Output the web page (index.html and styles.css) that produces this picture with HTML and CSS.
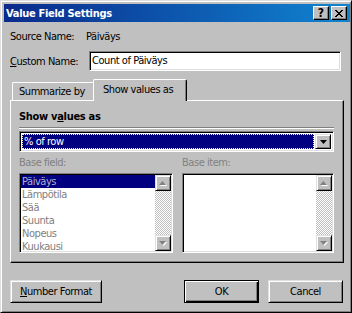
FILE: index.html
```html
<!DOCTYPE html>
<html>
<head>
<meta charset="utf-8">
<link rel="stylesheet" href="styles.css">
</head>
<body>
<div class="window">
  <div class="titlebar">
    <span class="title">Value Field Settings</span>
    <div class="tbtns">
      <div class="tbtn help">?</div>
      <div class="tbtn close">
        <svg width="8" height="7" viewBox="0 0 8 7"><path d="M0 0h2v1h1v1h2v-1h1v-1h2v1h-1v1h-1v1h-1v1h1v1h1v1h1v1h-2v-1h-1v-1h-2v1h-1v1h-2v-1h1v-1h1v-1h1v-1h-1v-1h-1v-1h-1z" fill="#000"/></svg>
      </div>
    </div>
  </div>
  <div class="content">
    <div class="row source">
      <span class="lbl lbl-src">Source Name:</span>
      <span>Päiväys</span>
    </div>
    <div class="row custom">
      <span class="lbl lbl-cust"><u>C</u>ustom Name:</span>
      <div class="field">Count of Päiväys</div>
    </div>
    <div class="tabs">
      <div class="tab inactive">Summarize by</div>
      <div class="tab active">Show values as</div>
    </div>
    <div class="panel">
      <div class="heading">Show v<u>a</u>lues as</div>
      <div class="etch"></div>
      <div class="combo">
        <div class="combo-sel"><span>% of row</span></div>
        <div class="btn3d combo-btn">
          <svg width="7" height="4" viewBox="0 0 7 4"><path d="M0 0h7l-3.5 4z" fill="#000"/></svg>
        </div>
      </div>
      <div class="pair labels">
        <span class="dis">Base field:</span>
        <span class="dis">Base item:</span>
      </div>
      <div class="pair lists">
        <div class="list">
          <div class="items">
            <div class="item sel">Päiväys</div>
            <div class="item">Lämpötila</div>
            <div class="item">Sää</div>
            <div class="item">Suunta</div>
            <div class="item">Nopeus</div>
            <div class="item">Kuukausi</div>
          </div>
          <div class="sbar">
            <div class="btn3d sbtn">
              <svg width="8" height="5" viewBox="0 0 8 5"><path d="M1 5h7l-3.5-4z" fill="#fff"/><path d="M0 4h7l-3.5-4z" fill="#808080"/></svg>
            </div>
            <div class="track"></div>
            <div class="btn3d sbtn">
              <svg width="8" height="5" viewBox="0 0 8 5"><path d="M1 1h7l-3.5 4z" fill="#fff"/><path d="M0 0h7l-3.5 4z" fill="#808080"/></svg>
            </div>
          </div>
        </div>
        <div class="list">
          <div class="items"></div>
          <div class="sbar">
            <div class="btn3d sbtn">
              <svg width="8" height="5" viewBox="0 0 8 5"><path d="M1 5h7l-3.5-4z" fill="#fff"/><path d="M0 4h7l-3.5-4z" fill="#808080"/></svg>
            </div>
            <div class="track"></div>
            <div class="btn3d sbtn">
              <svg width="8" height="5" viewBox="0 0 8 5"><path d="M1 1h7l-3.5 4z" fill="#fff"/><path d="M0 0h7l-3.5 4z" fill="#808080"/></svg>
            </div>
          </div>
        </div>
      </div>
    </div>
    <div class="buttons">
      <div class="btn3d pbtn nf"><span><u>N</u>umber Format</span></div>
      <div class="spacer"></div>
      <div class="btn3d pbtn ok default">OK</div>
      <div class="btn3d pbtn cancel">Cancel</div>
    </div>
  </div>
</div>
</body>
</html>
```

FILE: styles.css
```css
html, body {
  margin: 0;
  padding: 0;
  background: #c0c0c0;
}
body {
  font-family: "DejaVu Sans Condensed", "DejaVu Sans", sans-serif;
  font-stretch: condensed;
  font-size: 11px;
  letter-spacing: -0.45px;
  line-height: 13px;
  color: #000;
}
u { text-decoration: underline; text-underline-offset: 1px; }

.window {
  width: 352px;
  height: 313px;
  box-sizing: border-box;
  border: 1px solid;
  border-color: #dfdfdf #000 #000 #dfdfdf;
  box-shadow: inset 1px 1px #fff, inset -1px -1px #808080;
  padding: 3px 1px 2px 3px;
  display: flex;
  flex-direction: column;
}

.titlebar {
  height: 18px;
  flex: none;
  display: flex;
  align-items: center;
  justify-content: space-between;
  padding: 0 3px 0 2px;
  background: linear-gradient(to right, #0a2a8c, #1084d0);
}
.title {
  color: #fff;
  font-weight: bold;
  font-size: 11px;
  letter-spacing: -0.3px;
}
.tbtns { display: flex; gap: 2px; }
.tbtn {
  width: 16px;
  height: 14px;
  box-sizing: border-box;
  background: #c0c0c0;
  border: 1px solid;
  border-color: #fff #000 #000 #fff;
  box-shadow: inset -1px -1px #808080;
  display: flex;
  align-items: center;
  justify-content: center;
  font-weight: bold;
  font-size: 12px;
  line-height: 12px;
  letter-spacing: 0;
}

.content {
  padding: 0 6px;
  display: flex;
  flex-direction: column;
}
.row { display: flex; align-items: center; }
.source { margin-top: 8px; height: 13px; }
.lbl-src { width: 76px; }
.custom { margin-top: 8px; height: 20px; }
.lbl-cust { width: 79px; }
.field {
  width: 252px;
  height: 20px;
  box-sizing: border-box;
  background: #fff;
  border: 1px solid;
  border-color: #808080 #fff #fff #808080;
  box-shadow: inset 1px 1px #000, inset -1px -1px #dfdfdf;
  padding: 2px 2px 0;
}

.tabs {
  margin-top: 8px;
  height: 21px;
  display: flex;
  align-items: flex-end;
  padding-left: 2px;
}
.tab {
  box-sizing: border-box;
  background: #c0c0c0;
  border-top: 1px solid #fff;
  border-left: 1px solid #fff;
  border-right: 1px solid #000;
  box-shadow: inset -1px 0 #808080;
  border-radius: 2px 2px 0 0;
}
.inactive {
  width: 83px;
  height: 18px;
  padding: 2px 0 0 6px;
}
.active {
  width: 94px;
  height: 22px;
  margin-left: -2px;
  margin-bottom: -1px;
  padding: 3px 0 0 9px;
  position: relative;
  z-index: 1;
}

.panel {
  height: 163px;
  box-sizing: border-box;
  border: 1px solid;
  border-color: #fff #000 #000 #fff;
  box-shadow: inset -1px -1px #808080;
  padding: 9px 9px 0 8px;
  display: flex;
  flex-direction: column;
}
.heading { font-weight: bold; height: 13px; letter-spacing: -0.3px; }
.etch {
  margin-top: 4px;
  border-top: 1px solid #808080;
  border-bottom: 1px solid #fff;
}
.combo {
  margin-top: 2px;
  height: 21px;
  box-sizing: border-box;
  background: #fff;
  border: 1px solid;
  border-color: #808080 #fff #fff #808080;
  box-shadow: inset 1px 1px #000, inset -1px -1px #dfdfdf;
  padding: 2px;
  display: flex;
}
.combo-sel {
  flex: 1;
  background: #000080;
  color: #fff;
  border: 1px dotted #ffffc0;
  padding-left: 1px;
  line-height: 13px;
  margin-right: 1px;
}
.btn3d {
  box-sizing: border-box;
  background: #c0c0c0;
  border: 1px solid;
  border-color: #dfdfdf #000 #000 #dfdfdf;
  box-shadow: inset 1px 1px #fff, inset -1px -1px #808080;
  display: flex;
  align-items: center;
  justify-content: center;
}
.combo-btn { width: 16px; }

.pair {
  display: grid;
  grid-template-columns: 154px 152px;
  column-gap: 9px;
}
.labels { margin-top: 4px; height: 13px; }
.dis { color: #808080; }
.lists { margin-top: 4px; }
.list {
  height: 80px;
  box-sizing: border-box;
  background: #fff;
  border: 1px solid;
  border-color: #808080 #fff #fff #808080;
  box-shadow: inset 1px 1px #000, inset -1px -1px #dfdfdf;
  padding: 1px;
  display: flex;
  overflow: hidden;
}
.items { flex: 1; overflow: hidden; }
.item {
  height: 13px;
  line-height: 13px;
  padding-left: 1px;
  color: #808080;
  white-space: nowrap;
}
.item.sel { background: #000080; color: #b4b4cc; }
.sbar {
  width: 16px;
  display: flex;
  flex-direction: column;
}
.sbtn { height: 16px; flex: none; }
.track {
  flex: 1;
  background-image: conic-gradient(#fff 25%, #c0c0c0 0 50%, #fff 0 75%, #c0c0c0 0);
  background-size: 2px 2px;
}

.buttons {
  margin-top: 17px;
  display: flex;
  height: 23px;
}
.pbtn { height: 23px; }
.nf { width: 92px; }
.spacer { flex: 1; }
.ok { width: 75px; }
.default {
  border-color: #000;
  box-shadow: inset 1px 1px #fff, inset -1px -1px #000, inset -2px -2px #808080;
}
.cancel { width: 75px; margin-left: 9px; margin-right: 1px; }
```
